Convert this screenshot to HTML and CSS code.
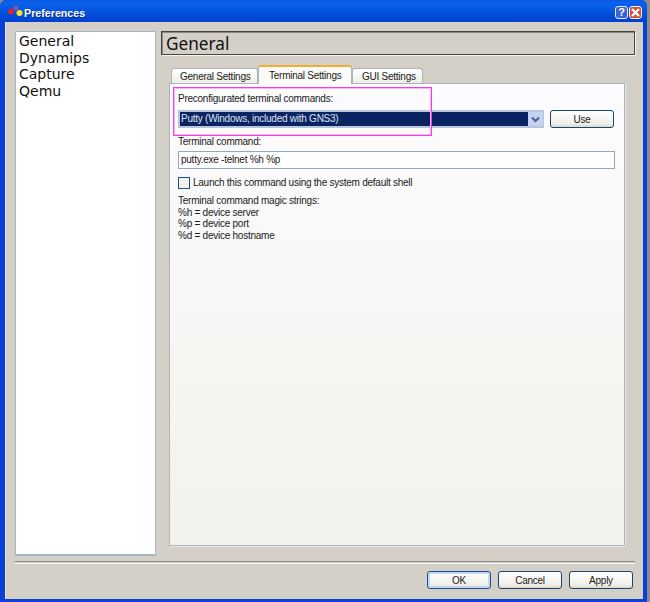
FILE: index.html
```html
<!DOCTYPE html>
<html lang="en">
<head>
<meta charset="utf-8">
<title>Preferences</title>
<link rel="stylesheet" href="styles.css">
</head>
<body>
<div class="window">
  <header class="titlebar">
    <svg class="app-icon" width="18" height="14" viewBox="0 0 18 14">
      <circle cx="4" cy="6.5" r="3" fill="#d8243a"/>
      <circle cx="9" cy="3" r="2.2" fill="#8a5aa8"/>
      <circle cx="12.5" cy="8" r="3" fill="#f6e61a"/>
    </svg>
    <span class="title">Preferences</span>
    <span class="caption-btn help">?</span>
    <span class="caption-btn close">
      <svg width="11" height="11" viewBox="0 0 11 11"><path d="M2 2l7 7M9 2l-7 7" stroke="#fff" stroke-width="2.4" fill="none"/></svg>
    </span>
  </header>
  <div class="client">
    <div class="main">
      <ul class="nav">
        <li>General</li>
        <li>Dynamips</li>
        <li>Capture</li>
        <li>Qemu</li>
      </ul>
      <div class="content">
        <h1 class="heading">General</h1>
        <div class="tabs-wrap">
          <div class="tabs">
            <span class="tab tab-first">General Settings</span>
            <span class="tab tab-active">Terminal Settings</span>
            <span class="tab tab-last">GUI Settings</span>
          </div>
          <div class="pane">
            <div class="highlight"></div>
            <p class="label">Preconfigurated terminal commands:</p>
            <div class="combo-row">
              <div class="combo">
                <span class="combo-value">Putty (Windows, included with GNS3)</span>
                <span class="combo-arrow">
                  <svg width="9" height="7" viewBox="0 0 9 7"><path d="M1 1.5l3.5 3.5L8 1.5" stroke="#4d6185" stroke-width="2" fill="none"/></svg>
                </span>
              </div>
              <button class="btn btn-use">Use</button>
            </div>
            <p class="label label-cmd">Terminal command:</p>
            <div class="input">putty.exe -telnet %h %p</div>
            <div class="check-row">
              <span class="checkbox"></span>
              <span>Launch this command using the system default shell</span>
            </div>
            <div class="magic">
              <p>Terminal command magic strings:</p>
              <p>%h = device server</p>
              <p>%p = device port</p>
              <p>%d = device hostname</p>
            </div>
          </div>
        </div>
      </div>
    </div>
    <div class="separator"></div>
    <div class="actions">
      <button class="btn btn-default">OK</button>
      <button class="btn">Cancel</button>
      <button class="btn">Apply</button>
    </div>
  </div>
</div>
</body>
</html>
```
FILE: styles.css
```css
* { box-sizing: border-box; }
html, body { margin: 0; padding: 0; }
body {
  width: 650px;
  height: 602px;
  background: #8d8d8d;
  overflow: hidden;
  font-family: "Liberation Sans", sans-serif;
  font-size: 10px;
  letter-spacing: -0.25px;
  color: #1a1a1a;
}
.window {
  width: 647px;
  height: 602px;
  display: flex;
  flex-direction: column;
  background: #0a3fd8;
  border-radius: 6px 6px 0 0;
  padding: 0 4px 3px 5px;
}
.titlebar {
  height: 22px;
  flex: none;
  margin: 0 -4px 0 -5px;
  padding: 3px 5px 0 7px;
  display: flex;
  align-items: center;
  border-radius: 6px 6px 0 0;
  background: linear-gradient(#0a58e4 0, #0b62ea 3px, #0353dd 12px, #0140cf 100%);
}
.app-icon { flex: none; margin-top: -1px; }
.title {
  flex: 1;
  margin-left: -1px;
  color: #fff;
  font-weight: 700;
  font-size: 10.7px;
  letter-spacing: 0;
  text-shadow: 1px 1px 0 #0a2a90;
}
.caption-btn {
  width: 13px;
  height: 13px;
  border: 1px solid #e8eefc;
  border-radius: 3px;
  margin-left: 1px;
  margin-top: -1px;
  display: flex;
  align-items: center;
  justify-content: center;
  color: #fff;
  font-weight: 700;
  font-size: 11px;
}
.help { background: #3a62d8; }
.close { background: #d5512c; }
.client {
  flex: 1;
  display: flex;
  flex-direction: column;
  background: #d4d0c8;
  border-left: 1px solid #e8e6de;
  padding: 9px 8px 10px 9px;
  min-height: 0;
}
.main {
  display: flex;
  gap: 5px;
  height: 525px;
  flex: none;
}
.nav {
  width: 141px;
  flex: none;
  margin: 0;
  padding: 1px 3px;
  list-style: none;
  background: #fff;
  border: 1px solid #a5b6c6;
  border-width: 1px 1px 2px 1px;
  font-family: "DejaVu Sans", sans-serif;
  font-size: 14px;
  letter-spacing: 0;
  line-height: 16.6px;
  color: #111;
}
.content {
  flex: 1;
  display: flex;
  flex-direction: column;
  min-width: 0;
}
.heading {
  height: 24px;
  flex: none;
  margin: 0;
  padding-left: 4px;
  font-family: "Noto Sans", sans-serif;
  font-weight: 400;
  font-size: 17.2px;
  letter-spacing: 0;
  line-height: 23px;
  color: #111;
  background: #d4d0c8;
  border: 1px solid #45443f;
  box-shadow: 1px 1px 0 #f6f5f0, inset 1px 1px 0 #8a8880;
}
.tabs-wrap {
  margin: 10px 10px 10px 8px;
  flex: 1;
  display: flex;
  flex-direction: column;
  min-height: 0;
}
.tabs {
  display: flex;
  align-items: flex-end;
  height: 18px;
  flex: none;
  padding-left: 2px;
  position: relative;
  z-index: 1;
  white-space: nowrap;
}
.tab {
  height: 15px;
  padding: 0 8px;
  display: flex;
  align-items: center;
  background: linear-gradient(#fff, #eeeee6);
  border: 1px solid #a9b7c2;
  border-bottom: 0;
  border-radius: 3px 3px 0 0;
}
.tab-first { width: 87px; }
.tab-active {
  width: 94px;
  height: 19px;
  padding: 0 10px;
  background: #fbfbf9;
  border-top: 2px solid #f4ad2c;
  margin-bottom: -1px;
}
.tab-last { width: 71px; padding: 0 9px; }
.pane {
  flex: 1;
  position: relative;
  background: linear-gradient(#fcfcfe, #f2f1eb);
  border: 1px solid #a9b4bc;
  box-shadow: 1px 1px 0 #e8e6de;
  padding: 8px 10px 0 8px;
}
.highlight {
  position: absolute;
  left: 3px;
  top: 3px;
  width: 259px;
  height: 49px;
  border: 1px solid #f43ee8;
  box-shadow: inset 0 0 0 1px #fbb4f8;
  z-index: 2;
}
.label { margin: 0; line-height: 14px; }
.combo-row {
  display: flex;
  justify-content: space-between;
  margin-top: 4px;
  height: 18px;
}
.combo {
  width: 366px;
  display: flex;
  background: #0a2363;
  border: 2px solid #b9c6da;
  border-right-width: 1px;
  color: #dfe4f0;
}
.combo-value { flex: 1; line-height: 14px; padding-left: 1px; }
.combo-arrow {
  width: 15px;
  background: #c3d3f6;
  display: flex;
  align-items: center;
  justify-content: center;
}
.btn {
  width: 64px;
  height: 18px;
  padding: 0;
  font: inherit;
  letter-spacing: inherit;
  color: #1a1a1a;
  background: linear-gradient(#fff, #f0efe8 80%, #dcd8ce);
  border: 1px solid #17466e;
  border-radius: 3px;
}
.label-cmd { margin-top: 7px; }
.input {
  margin-top: 2px;
  height: 18px;
  width: 437px;
  background: #fff;
  border: 1px solid #8fa9c2;
  line-height: 16px;
  padding-left: 2px;
}
.check-row {
  margin-top: 7px;
  display: flex;
  align-items: center;
  gap: 3px;
  height: 13px;
}
.checkbox {
  width: 12px;
  height: 12px;
  background: #f2f1ea;
  border: 1px solid #1d5180;
}
.magic { margin-top: 6px; }
.magic p { margin: 0; line-height: 11.5px; }
.separator {
  height: 3px;
  flex: none;
  margin-top: 5px;
  border-top: 1px solid #8f8d86;
  border-bottom: 1px solid #f5f4f0;
}
.actions {
  display: flex;
  justify-content: flex-end;
  gap: 7px;
  margin-top: 7px;
  padding-right: 2px;
}
.btn-default {
  border-color: #1d4f8a;
  box-shadow: inset 0 0 0 2px #c4d6f4;
}
```
